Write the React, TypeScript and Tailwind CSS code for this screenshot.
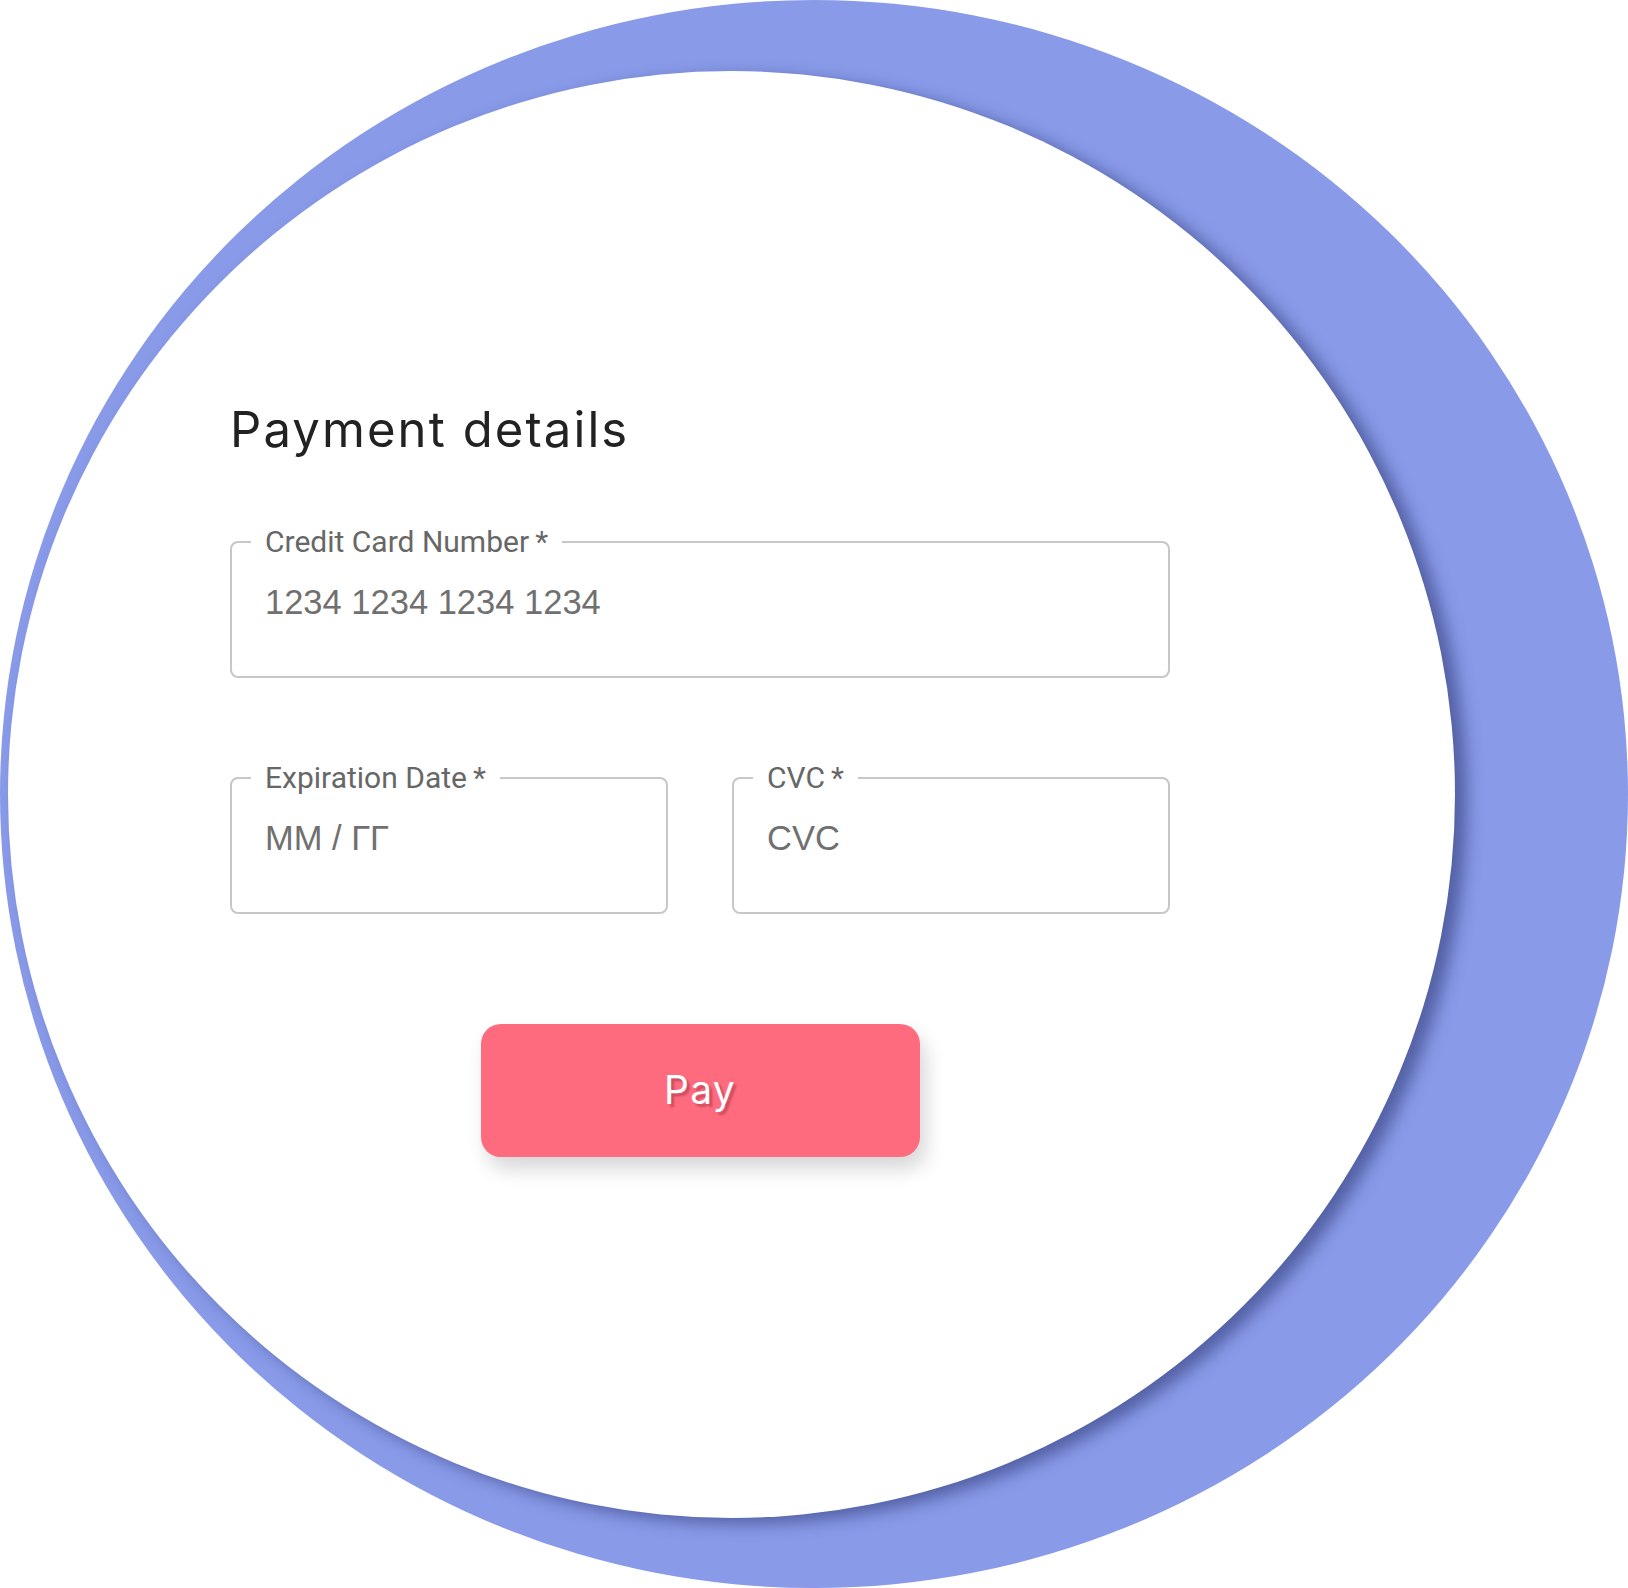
import React from "react";

function Field({
  label,
  value,
  className,
}: {
  label: string;
  value: string;
  className?: string;
}) {
  return (
    <fieldset
      className={
        "m-0 min-w-0 rounded-[8px] border-2 border-[#c7c7c7] pl-[19px] pr-[19px] pt-0 pb-[54px] " +
        (className ?? "")
      }
    >
      <legend className="px-[14px] font-['Roboto',sans-serif] text-[30px] leading-[28px] tracking-[0px] text-[#676767]">
        {label}
        {"\u2009*"}
      </legend>
      <div className="pt-[26px] pl-[14px] font-['Liberation_Sans',Arial,sans-serif] text-[34.5px] leading-[40px] text-[#707070]">
        {value}
      </div>
    </fieldset>
  );
}

export default function App() {
  return (
    <div className="w-[1628px] h-[1588px] bg-white overflow-hidden">
      <div className="w-[1628px] h-[1588px] rounded-[50%] bg-[#889ae8] pl-[8px] pt-[71px]">
        <div className="w-[1447px] h-[1447px] rounded-full bg-white shadow-[12px_6px_16px_rgba(40,50,110,0.55)] pl-[222px] pt-[334px]">
          <div className="w-[940px] flex flex-col">
            <h1 className="font-['Inter',sans-serif] text-[49px] leading-[49px] font-normal text-[#222222] tracking-[2.1px]">
              Payment details
            </h1>
            <Field
              label="Credit Card Number"
              value="1234 1234 1234 1234"
              className="mt-[74px]"
            />
            <div className="mt-[86px] flex gap-[64px]">
              <Field label="Expiration Date" value="MM / ГГ" className="flex-1" />
              <Field label="CVC" value="CVC" className="flex-1" />
            </div>
            <div className="mt-[110px] flex justify-center">
              <button className="w-[439px] h-[133px] rounded-[20px] bg-[#fe6a7e] shadow-[6px_12px_20px_rgba(0,0,0,0.16)] font-['Inter',sans-serif] text-[39px] tracking-[1.2px] text-white [text-shadow:3px_3px_2px_rgba(150,40,60,0.45)]">
                Pay
              </button>
            </div>
          </div>
        </div>
      </div>
    </div>
  );
}
